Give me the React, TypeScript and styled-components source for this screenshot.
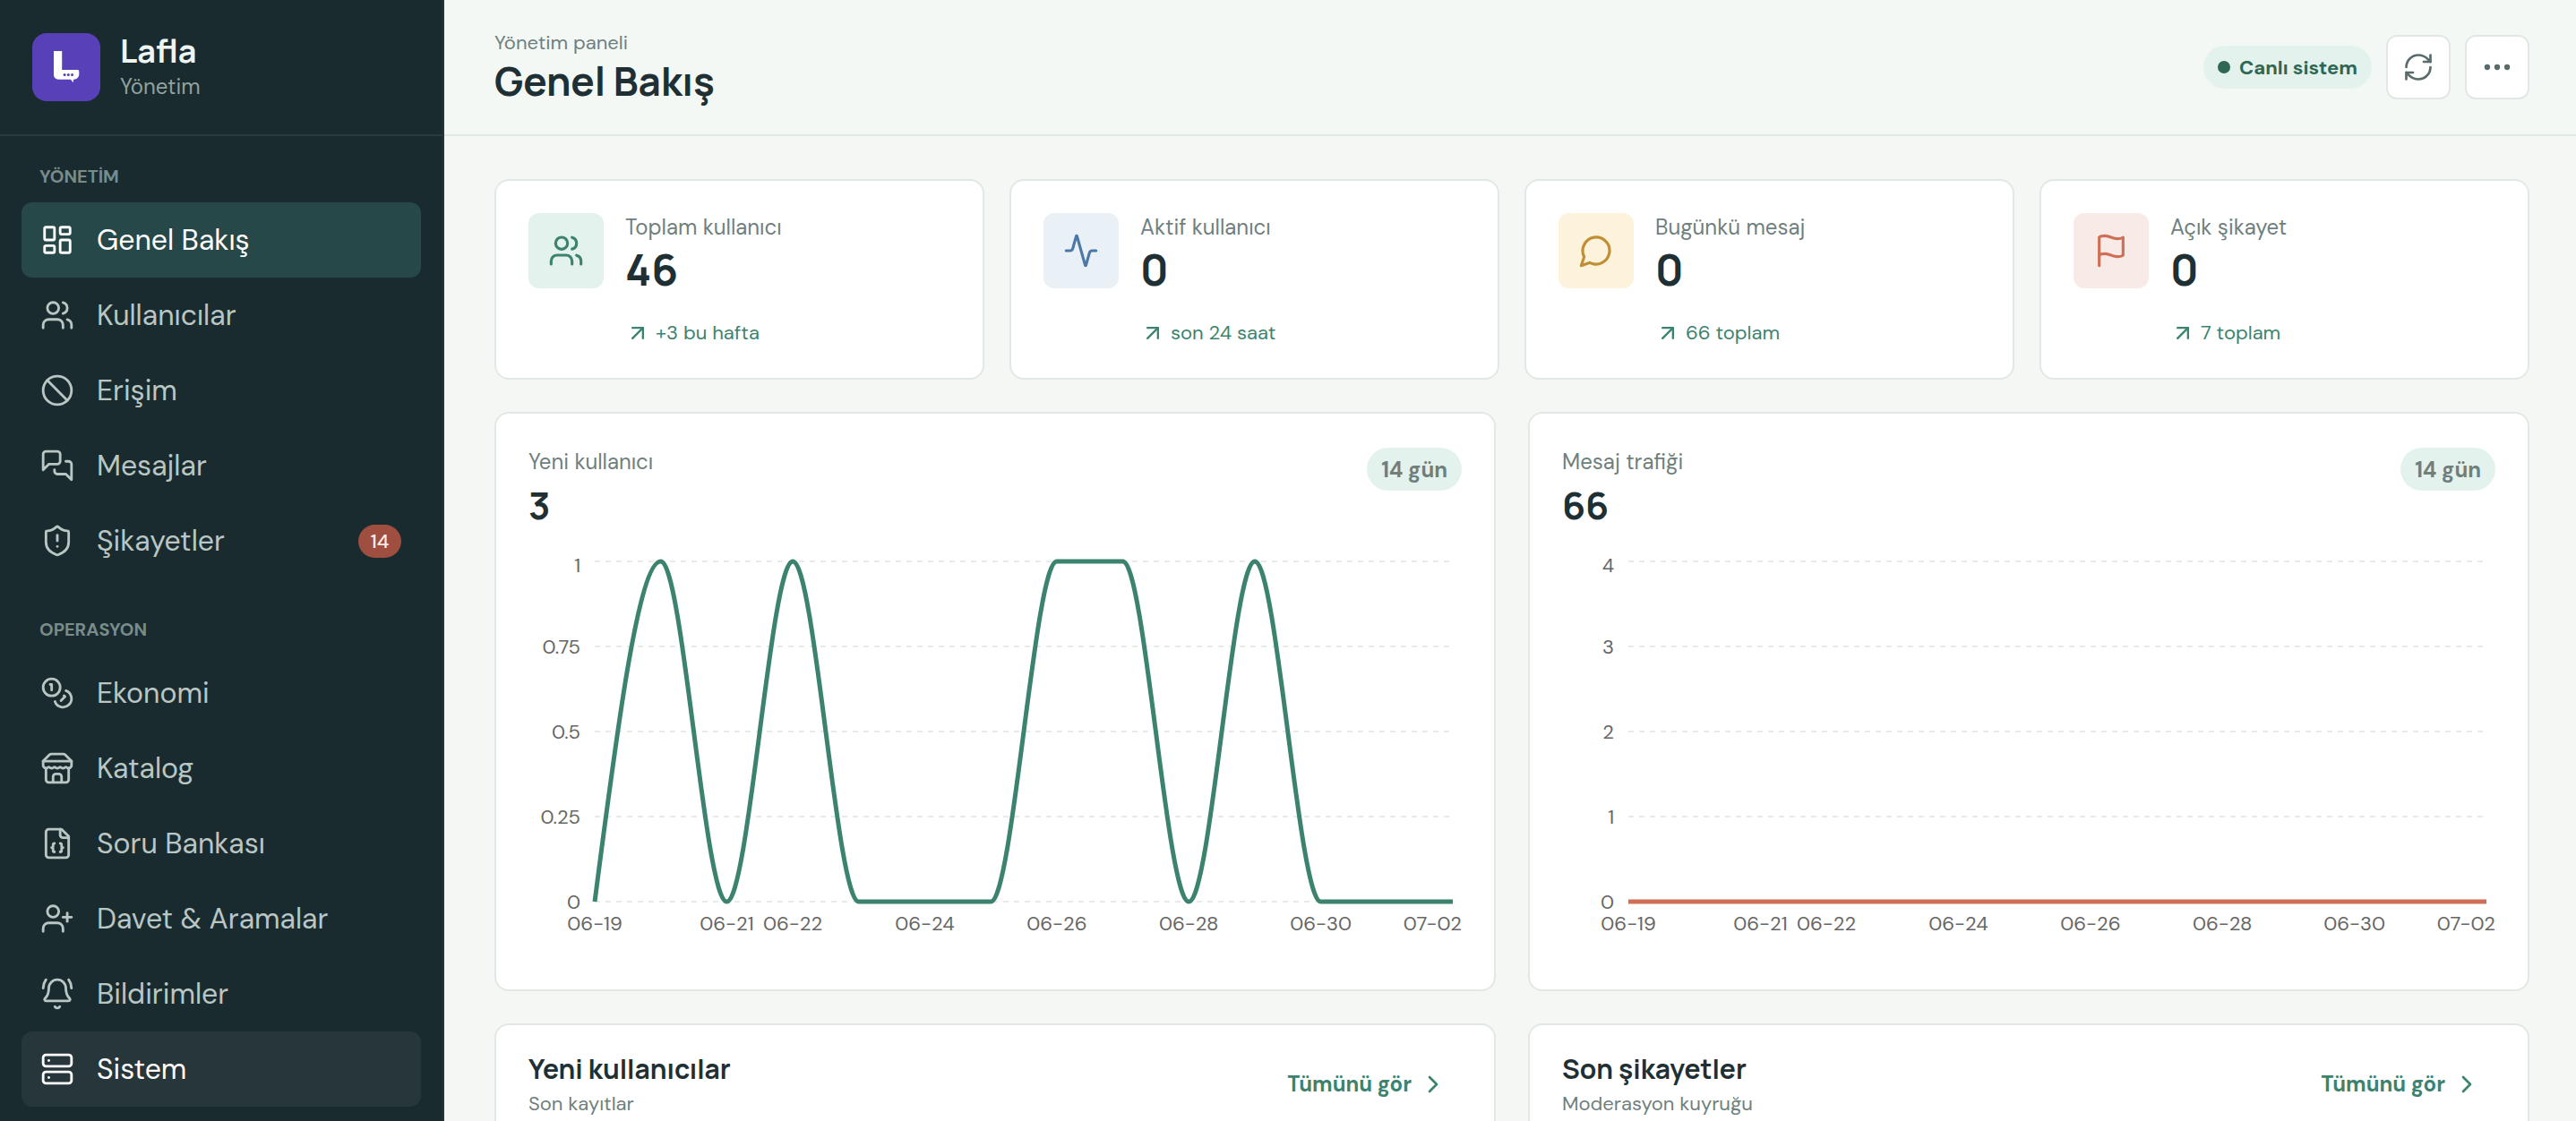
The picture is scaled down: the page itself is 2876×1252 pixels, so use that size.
import React from "react";
import { createGlobalStyle, styled } from "styled-components";
import {
  Activity,
  ArrowUpRight,
  Ban,
  BellRing,
  ChevronRight,
  Ellipsis,
  LayoutDashboard,
  RefreshCw,
  Server,
  ShieldAlert,
  UserPlus,
  Users,
} from "lucide-react";

const GlobalStyle = createGlobalStyle`
  * {
    box-sizing: border-box;
  }
  html, body, #root {
    height: 100%;
  }
  body {
    margin: 0;
    overflow: hidden;
    background: #f5f7f5;
    color: #1f3035;
    font-family: "DM Sans", Inter, sans-serif;
    -webkit-font-smoothing: antialiased;
  }
  h1, h2, p {
    margin: 0;
  }
  svg {
    display: block;
    flex-shrink: 0;
  }
`;

const display = `Manrope, "DM Sans", Inter, sans-serif`;

type IconProps = { size: number; strokeWidth: number };

// icons lucide draws differently now
const makeIcon = (paths: string[]) =>
  function Icon({ size, strokeWidth }: IconProps) {
    return (
      <svg
        width={size}
        height={size}
        viewBox="0 0 24 24"
        fill="none"
        stroke="currentColor"
        strokeWidth={strokeWidth}
        strokeLinecap="round"
        strokeLinejoin="round"
      >
        {paths.map((d) => (
          <path key={d} d={d} />
        ))}
      </svg>
    );
  };

const Messages = makeIcon([
  "M14 9a2 2 0 0 1-2 2H6l-4 4V4a2 2 0 0 1 2-2h8a2 2 0 0 1 2 2z",
  "M18 9h2a2 2 0 0 1 2 2v11l-4-4h-6a2 2 0 0 1-2-2v-1",
]);
const Coins = makeIcon([
  "M14 8A6 6 0 1 1 2 8a6 6 0 0 1 12 0z",
  "M18.09 10.37A6 6 0 1 1 10.34 18",
  "M7 6h1v4",
  "m16.71 13.88.7.71-2.82 2.82",
]);
const Store = makeIcon([
  "m2 7 4.41-4.41A2 2 0 0 1 7.83 2h8.34a2 2 0 0 1 1.42.59L22 7",
  "M4 12v8a2 2 0 0 0 2 2h12a2 2 0 0 0 2-2v-8",
  "M15 22v-4a2 2 0 0 0-2-2h-2a2 2 0 0 0-2 2v4",
  "M2 7h20",
  "M22 7v3a2 2 0 0 1-2 2a2.7 2.7 0 0 1-1.59-.63.7.7 0 0 0-.82 0A2.7 2.7 0 0 1 16 12a2.7 2.7 0 0 1-1.59-.63.7.7 0 0 0-.82 0A2.7 2.7 0 0 1 12 12a2.7 2.7 0 0 1-1.59-.63.7.7 0 0 0-.82 0A2.7 2.7 0 0 1 8 12a2.7 2.7 0 0 1-1.59-.63.7.7 0 0 0-.82 0A2.7 2.7 0 0 1 4 12a2 2 0 0 1-2-2V7",
]);
const FileJson = makeIcon([
  "M15 2H6a2 2 0 0 0-2 2v16a2 2 0 0 0 2 2h12a2 2 0 0 0 2-2V7Z",
  "M14 2v4a2 2 0 0 0 2 2h4",
  "M10 12a1 1 0 0 0-1 1v1a1 1 0 0 1-1 1 1 1 0 0 1 1 1v1a1 1 0 0 0 1 1",
  "M14 18a1 1 0 0 0 1-1v-1a1 1 0 0 1 1-1 1 1 0 0 1-1-1v-1a1 1 0 0 0-1-1",
]);
const MessageCircle = makeIcon(["M7.9 20A9 9 0 1 0 4 16.1L2 22Z"]);
const Flag = makeIcon([
  "M4 15s1-1 4-1 5 2 8 2 4-1 4-1V3s-1 1-4 1-5-2-8-2-4 1-4 1z",
  "M4 22v-7",
]);

const Layout = styled.div`
  display: flex;
  height: 100%;
`;

const Sidebar = styled.aside`
  width: 496px;
  flex-shrink: 0;
  background: #192b2f;
  border-right: 2px solid #24373b;
`;

const Brand = styled.div`
  display: flex;
  align-items: center;
  gap: 22px;
  height: 152px;
  padding: 0 36px;
  border-bottom: 2px solid #293b3f;
`;

const BrandText = styled.div`
  display: flex;
  flex-direction: column;
  gap: 4px;
`;

const BrandName = styled.p`
  font: 700 36px/40px ${display};
  color: #eef4f1;
`;

const BrandRole = styled.p`
  font-size: 24px;
  line-height: 32px;
  color: #8fa29f;
`;

const Nav = styled.nav`
  display: flex;
  flex-direction: column;
  gap: 44px;
  padding: 32px 24px 0;
`;

const NavLabel = styled.p`
  margin-bottom: 16px;
  padding-left: 20px;
  font-size: 20px;
  font-weight: 700;
  line-height: 26px;
  color: #788c89;
`;

const NavItem = styled.a<{ $active?: boolean; $hover?: boolean }>`
  display: flex;
  align-items: center;
  gap: 25px;
  height: 84px;
  padding: 0 22px 0 21px;
  border-radius: 12px;
  font-size: 32px;
  background: ${({ $active, $hover }) => ($active ? "#274848" : $hover ? "#26363a" : "transparent")};
  color: ${({ $active, $hover }) => ($active || $hover ? "#ffffff" : "#b9c6c3")};
`;

const NavBadge = styled.span`
  margin-left: auto;
  width: 48px;
  height: 37px;
  border-radius: 19px;
  background: #9f4e40;
  color: #fdebe6;
  font-size: 22px;
  font-weight: 500;
  line-height: 37px;
  text-align: center;
`;

const Main = styled.main`
  display: flex;
  flex-direction: column;
  flex: 1;
  min-width: 0;
`;

const Header = styled.header`
  display: flex;
  align-items: center;
  justify-content: space-between;
  height: 152px;
  flex-shrink: 0;
  padding: 0 52px 0 56px;
  background: #f3f8f5;
  border-bottom: 2px solid #e1e9e5;
`;

const Crumb = styled.p`
  font-size: 22px;
  line-height: 31px;
  color: #6f7f7e;
`;

const PageTitle = styled.h1`
  font: 700 44px/55px ${display};
`;

const Actions = styled.div`
  display: flex;
  align-items: center;
  gap: 16px;
`;

const Status = styled.div`
  display: flex;
  align-items: center;
  gap: 10px;
  height: 48px;
  padding: 0 16px;
  border-radius: 24px;
  background: #e4f2ed;
  color: #2f6654;
  font-size: 22px;
  font-weight: 700;
`;

const Dot = styled.i`
  width: 14px;
  height: 14px;
  border-radius: 50%;
  background: currentColor;
`;

const IconButton = styled.button`
  display: grid;
  place-items: center;
  width: 72px;
  height: 72px;
  padding: 0;
  border: 2px solid #e1e8e5;
  border-radius: 12px;
  background: #ffffff;
  color: #5a6b6c;
`;

const Content = styled.div`
  display: flex;
  flex-direction: column;
  flex: 1;
  gap: 36px;
  min-height: 0;
  padding: 48px 52px 0 56px;
`;

const Card = styled.section`
  border: 2px solid #e1e8e5;
  border-radius: 16px;
  background: #ffffff;
`;

const StatGrid = styled.div`
  display: grid;
  grid-template-columns: repeat(4, 1fr);
  gap: 28px;
`;

const StatCard = styled(Card)`
  display: flex;
  gap: 24px;
  height: 224px;
  padding: 36px;
`;

const StatIcon = styled.div<{ $fg: string; $bg: string }>`
  display: grid;
  place-items: center;
  width: 84px;
  height: 84px;
  border-radius: 12px;
  color: ${({ $fg }) => $fg};
  background: ${({ $bg }) => $bg};
`;

const Label = styled.p`
  font-size: 24px;
  line-height: 31px;
  color: #6f7f7e;
`;

const StatValue = styled.p`
  margin-top: 5px;
  font: 700 48px/54px ${display};
`;

const Trend = styled.p`
  display: flex;
  align-items: center;
  gap: 6px;
  margin-top: 29px;
  font-size: 22px;
  line-height: 29px;
  color: #3c836f;
`;

const HalfGrid = styled.div<{ $fill?: boolean }>`
  display: grid;
  grid-template-columns: 1fr 1fr;
  gap: 36px;
  flex: ${({ $fill }) => ($fill ? 1 : "none")};
`;

const ChartCard = styled(Card)`
  height: 647px;
  padding: 38px 36px 0;
`;

const ChartHead = styled.div`
  display: flex;
  align-items: flex-start;
  justify-content: space-between;
  height: 104px;
`;

const ChartValue = styled.p`
  margin-top: 10px;
  font: 700 42px/46px ${display};
`;

const Range = styled.span`
  height: 48px;
  padding: 0 16px;
  border-radius: 24px;
  background: #e4f2ed;
  color: #6f7f7e;
  font-size: 24px;
  font-weight: 700;
  line-height: 49px;
`;

const Plot = styled.svg`
  overflow: visible;

  text {
    font-size: 22px;
    fill: #666666;
  }
`;

const ListCard = styled(Card)`
  padding: 29px 36px 0;
  border-bottom: 0;
  border-radius: 16px 16px 0 0;
`;

const ListHead = styled.div`
  display: flex;
  align-items: center;
  justify-content: space-between;
`;

const ListTitle = styled.h2`
  font: 700 30px/40px ${display};
`;

const ListSub = styled.p`
  margin-top: 4px;
  font-size: 22px;
  line-height: 29px;
  color: #6f7f7e;
`;

const SeeAll = styled.a`
  display: flex;
  align-items: center;
  gap: 8px;
  padding-right: 16px;
  font-size: 24px;
  font-weight: 700;
  color: #3c836f;
`;

const management = [
  { icon: LayoutDashboard, text: "Genel Bakış", active: true },
  { icon: Users, text: "Kullanıcılar" },
  { icon: Ban, text: "Erişim" },
  { icon: Messages, text: "Mesajlar" },
  { icon: ShieldAlert, text: "Şikayetler", badge: 14 },
];

const operation = [
  { icon: Coins, text: "Ekonomi" },
  { icon: Store, text: "Katalog" },
  { icon: FileJson, text: "Soru Bankası" },
  { icon: UserPlus, text: "Davet & Aramalar" },
  { icon: BellRing, text: "Bildirimler" },
  { icon: Server, text: "Sistem", hover: true },
];

const stats = [
  { icon: Users, fg: "#3c836f", bg: "#e4f2ed", label: "Toplam kullanıcı", value: 46, trend: "+3 bu hafta" },
  { icon: Activity, fg: "#4a79a8", bg: "#e9f0f6", label: "Aktif kullanıcı", value: 0, trend: "son 24 saat" },
  { icon: MessageCircle, fg: "#c08f33", bg: "#fdf2db", label: "Bugünkü mesaj", value: 0, trend: "66 toplam" },
  { icon: Flag, fg: "#d06f57", bg: "#f8eae6", label: "Açık şikayet", value: 0, trend: "7 toplam" },
];

const days = [
  { i: 0, text: "06-19" },
  { i: 2, text: "06-21" },
  { i: 3, text: "06-22" },
  { i: 5, text: "06-24" },
  { i: 7, text: "06-26" },
  { i: 9, text: "06-28" },
  { i: 11, text: "06-30" },
];

const LEFT = 74;
const RIGHT = 1032;
const TOP = 23;
const BOTTOM = 403;

// monotone cubic through the points, same curve as d3's curveMonotoneX
function linePath(values: number[], max: number) {
  const step = (RIGHT - LEFT) / (values.length - 1);
  const pts = values.map((v, i) => [LEFT + i * step, BOTTOM - (v / max) * (BOTTOM - TOP)]);
  const slope = pts.slice(1).map((p, i) => (p[1] - pts[i][1]) / step);
  const tangent = pts.map((_, i) => {
    if (i === 0 || i === pts.length - 1) return 0;
    const a = slope[i - 1];
    const b = slope[i];
    if (a * b <= 0) return 0;
    return Math.sign(a) * 2 * Math.min(Math.abs(a), Math.abs(b), Math.abs(a + b) / 4);
  });
  tangent[0] = (3 * slope[0] - tangent[1]) / 2;
  tangent[pts.length - 1] = (3 * slope[slope.length - 1] - tangent[pts.length - 2]) / 2;
  const t = step / 3;
  return pts.reduce((d, [x, y], i) => {
    if (i === 0) return `M${x},${y}`;
    const [px, py] = pts[i - 1];
    return `${d}C${px + t},${py + t * tangent[i - 1]},${x - t},${y - t * tangent[i]},${x},${y}`;
  }, "");
}

type ChartProps = {
  title: string;
  total: number;
  color: string;
  values: number[];
  ticks: number[];
};

function Chart({ title, total, color, values, ticks }: ChartProps) {
  const max = ticks[ticks.length - 1];
  const step = (RIGHT - LEFT) / (values.length - 1);
  return (
    <ChartCard>
      <ChartHead>
        <div>
          <Label>{title}</Label>
          <ChartValue>{total}</ChartValue>
        </div>
        <Range>14 gün</Range>
      </ChartHead>
      <Plot width={1042} height={450}>
        {ticks.map((tick) => {
          const y = BOTTOM - (tick / max) * (BOTTOM - TOP);
          return (
            <g key={tick}>
              <line x1={LEFT} x2={RIGHT} y1={y} y2={y} stroke="#e6ebe9" strokeWidth={2} strokeDasharray="6 6" />
              <text x={58} y={tick === max ? y + 12 : y + 8} textAnchor="end">
                {tick}
              </text>
            </g>
          );
        })}
        <path d={linePath(values, max)} fill="none" stroke={color} strokeWidth={5} />
        {days.map(({ i, text }) => (
          <text key={text} x={LEFT + i * step} y={435} textAnchor="middle">
            {text}
          </text>
        ))}
        <text x={1042} y={435} textAnchor="end">
          07-02
        </text>
      </Plot>
    </ChartCard>
  );
}

function List({ title, sub }: { title: string; sub: string }) {
  return (
    <ListCard>
      <ListHead>
        <div>
          <ListTitle>{title}</ListTitle>
          <ListSub>{sub}</ListSub>
        </div>
        <SeeAll>
          Tümünü gör
          <ChevronRight size={32} strokeWidth={2} />
        </SeeAll>
      </ListHead>
    </ListCard>
  );
}

function Logo() {
  return (
    <svg width="76" height="76" viewBox="0 0 76 76">
      <rect width="76" height="76" rx="16" fill="#5840b8" />
      <path
        d="M24 20h9.2v21h17.6a1.5 1.5 0 0 1 1.5 1.5v3.7a5.5 5.5 0 0 1-5.5 5.5h-1l.2 3.5-3.2-3.5H29a5 5 0 0 1-5-5z"
        fill="#ffffff"
      />
      <circle cx="36.1" cy="46.4" r="1.5" fill="#5840b8" />
      <circle cx="40.3" cy="46.4" r="1.5" fill="#5840b8" />
      <circle cx="44.5" cy="46.4" r="1.5" fill="#5840b8" />
    </svg>
  );
}

export default function App() {
  return (
    <Layout>
      <GlobalStyle />
      <Sidebar>
        <Brand>
          <Logo />
          <BrandText>
            <BrandName>Lafla</BrandName>
            <BrandRole>Yönetim</BrandRole>
          </BrandText>
        </Brand>
        <Nav>
          <div>
            <NavLabel>YÖNETİM</NavLabel>
            {management.map(({ icon: Icon, text, active, badge }) => (
              <NavItem key={text} $active={active}>
                <Icon size={38} strokeWidth={1.8} />
                {text}
                {badge && <NavBadge>{badge}</NavBadge>}
              </NavItem>
            ))}
          </div>
          <div>
            <NavLabel>OPERASYON</NavLabel>
            {operation.map(({ icon: Icon, text, hover }) => (
              <NavItem key={text} $hover={hover}>
                <Icon size={38} strokeWidth={1.8} />
                {text}
              </NavItem>
            ))}
          </div>
        </Nav>
      </Sidebar>
      <Main>
        <Header>
          <div>
            <Crumb>Yönetim paneli</Crumb>
            <PageTitle>Genel Bakış</PageTitle>
          </div>
          <Actions>
            <Status>
              <Dot />
              Canlı sistem
            </Status>
            <IconButton>
              <RefreshCw size={36} strokeWidth={1.8} />
            </IconButton>
            <IconButton>
              <Ellipsis size={38} strokeWidth={2} />
            </IconButton>
          </Actions>
        </Header>
        <Content>
          <StatGrid>
            {stats.map(({ icon: Icon, fg, bg, label, value, trend }) => (
              <StatCard key={label}>
                <StatIcon $fg={fg} $bg={bg}>
                  <Icon size={40} strokeWidth={1.9} />
                </StatIcon>
                <div>
                  <Label>{label}</Label>
                  <StatValue>{value}</StatValue>
                  <Trend>
                    <ArrowUpRight size={28} strokeWidth={2} />
                    {trend}
                  </Trend>
                </div>
              </StatCard>
            ))}
          </StatGrid>
          <HalfGrid>
            <Chart
              title="Yeni kullanıcı"
              total={3}
              color="#3c836f"
              values={[0, 1, 0, 1, 0, 0, 0, 1, 1, 0, 1, 0, 0, 0]}
              ticks={[0, 0.25, 0.5, 0.75, 1]}
            />
            <Chart
              title="Mesaj trafiği"
              total={66}
              color="#d06f57"
              values={[0, 0, 0, 0, 0, 0, 0, 0, 0, 0, 0, 0, 0, 0]}
              ticks={[0, 1, 2, 3, 4]}
            />
          </HalfGrid>
          <HalfGrid $fill>
            <List title="Yeni kullanıcılar" sub="Son kayıtlar" />
            <List title="Son şikayetler" sub="Moderasyon kuyruğu" />
          </HalfGrid>
        </Content>
      </Main>
    </Layout>
  );
}
